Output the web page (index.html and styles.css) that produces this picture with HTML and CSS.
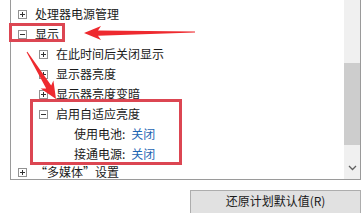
FILE: index.html
```html
<!DOCTYPE html>
<html lang="zh-CN">
<head>
<meta charset="utf-8">
<title>电源选项</title>
<link rel="stylesheet" href="styles.css">
</head>
<body>
<div class="page">
  <div class="panel">
    <div class="tree">
      <div class="row lvl0"><svg class="exp" width="9" height="9" viewBox="0 0 9 9"><rect x="0.5" y="0.5" width="8" height="8" fill="#fff" stroke="#919191"/><path d="M2 4.5H7M4.5 2V7" stroke="#333" stroke-width="1"/></svg><span>处理器电源管理</span></div>
      <div class="row lvl0"><svg class="exp" width="9" height="9" viewBox="0 0 9 9"><rect x="0.5" y="0.5" width="8" height="8" fill="#fff" stroke="#919191"/><path d="M2 4.5H7" stroke="#333" stroke-width="1"/></svg><span>显示</span></div>
      <div class="row lvl1"><svg class="exp" width="9" height="9" viewBox="0 0 9 9"><rect x="0.5" y="0.5" width="8" height="8" fill="#fff" stroke="#919191"/><path d="M2 4.5H7M4.5 2V7" stroke="#333" stroke-width="1"/></svg><span>在此时间后关闭显示</span></div>
      <div class="row lvl1"><svg class="exp" width="9" height="9" viewBox="0 0 9 9"><rect x="0.5" y="0.5" width="8" height="8" fill="#fff" stroke="#919191"/><path d="M2 4.5H7M4.5 2V7" stroke="#333" stroke-width="1"/></svg><span>显示器亮度</span></div>
      <div class="row lvl1"><svg class="exp" width="9" height="9" viewBox="0 0 9 9"><rect x="0.5" y="0.5" width="8" height="8" fill="#fff" stroke="#919191"/><path d="M2 4.5H7M4.5 2V7" stroke="#333" stroke-width="1"/></svg><span>显示器亮度变暗</span></div>
      <div class="row lvl1"><svg class="exp" width="9" height="9" viewBox="0 0 9 9"><rect x="0.5" y="0.5" width="8" height="8" fill="#fff" stroke="#919191"/><path d="M2 4.5H7" stroke="#333" stroke-width="1"/></svg><span>启用自适应亮度</span></div>
      <div class="row lvl2"><span>使用电池:</span><span class="val">关闭</span></div>
      <div class="row lvl2"><span>接通电源:</span><span class="val">关闭</span></div>
      <div class="row lvl0 last"><svg class="exp" width="9" height="9" viewBox="0 0 9 9"><rect x="0.5" y="0.5" width="8" height="8" fill="#fff" stroke="#919191"/><path d="M2 4.5H7M4.5 2V7" stroke="#333" stroke-width="1"/></svg><span>“多媒体”设置</span></div>
    </div>
    <div class="scrollbar">
      <div class="track-top"></div>
      <div class="thumb"></div>
      <div class="track-bottom"></div>
      <div class="arrow-down"><svg width="9" height="6" viewBox="0 0 9 6"><path d="M1 1L4.5 4.5L8 1" fill="none" stroke="#606060" stroke-width="1.3"/></svg></div>
    </div>
  </div>
  <div class="actions">
    <button class="btn" type="button">还原计划默认值(R)</button>
  </div>
  <svg class="annot" width="362" height="213" viewBox="0 0 362 213">
    <rect x="10.5" y="24.5" width="53" height="16" fill="none" stroke="#dc4652" stroke-width="3"/>
    <rect x="31.5" y="100.5" width="149" height="63" fill="none" stroke="#dc4652" stroke-width="3"/>
    <polygon points="84,33 101,26 98,30.4 195,31.6 195,32.6 98,35.8 101,40" fill="#ee2a2f"/>
    <polygon points="56,99 40.6,88.5 46.2,88.6 26.6,52.3 27.4,51.7 51.2,85.6 53.4,80.4" fill="#ee2a2f"/>
  </svg>
</div>
</body>
</html>
```

FILE: styles.css
```css
html, body {
  margin: 0;
  padding: 0;
  background: #ffffff;
}
.page {
  position: relative;
  width: 362px;
  height: 213px;
  overflow: hidden;
  font-family: "Noto Sans CJK SC", "Noto Sans", sans-serif;
  font-size: 12px;
  color: #1a1a1a;
}
.panel {
  margin-left: 10px;
  width: 349px;
  height: 179px;
  border-left: 1px solid #9a9a9a;
  border-right: 1px solid #9a9a9a;
  border-bottom: 1px solid #9a9a9a;
  display: flex;
}
.tree {
  flex: 1;
  padding-top: 4px;
}
.row {
  height: 20px;
  display: flex;
  align-items: center;
  white-space: nowrap;
  line-height: 20px;
}
.row.last {
  height: 15px;
  align-items: flex-start;
  line-height: 12px;
  padding-top: 2px;
}
.row.last .exp {
  margin-top: 2px;
}
.exp {
  flex: none;
  margin-right: 8px;
}
.lvl0 { padding-left: 7px; }
.lvl1 { padding-left: 28px; }
.lvl2 { padding-left: 63px; }
.val {
  color: #1f66b3;
  margin-left: 6px;
}
.scrollbar {
  width: 16px;
  flex: none;
  display: flex;
  flex-direction: column;
  background: #f0f0f0;
}
.track-top { height: 63px; }
.thumb {
  height: 82px;
  background: #cdcdcd;
}
.track-bottom { flex: 1; }
.arrow-down {
  height: 18px;
  display: flex;
  align-items: center;
  justify-content: center;
  padding-bottom: 5px;
  box-sizing: border-box;
}
.actions {
  padding-top: 10px;
  padding-left: 190px;
}
.btn {
  width: 171px;
  height: 24px;
  margin: 0;
  padding: 0 0 2px 0;
  border: 1px solid #adadad;
  background: #e1e1e1;
  font-family: "Noto Sans CJK SC", "Noto Sans", sans-serif;
  font-size: 12px;
  color: #1a1a1a;
  line-height: 20px;
}
.annot {
  position: absolute;
  left: 0;
  top: 0;
}
```
